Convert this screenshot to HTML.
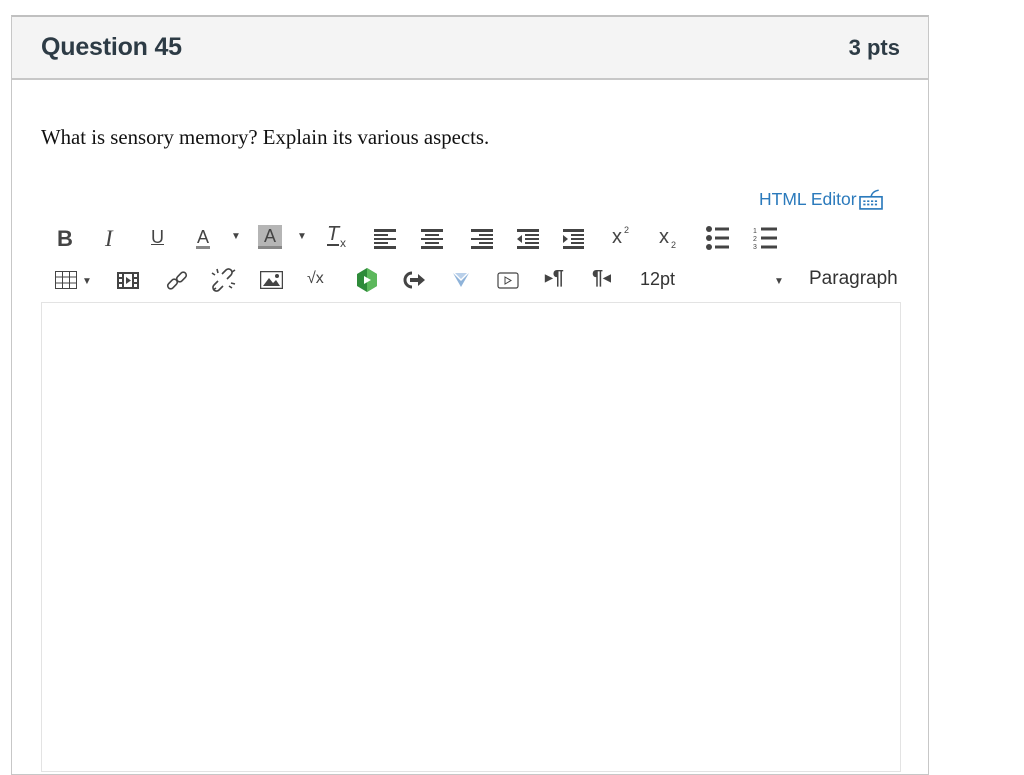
<!DOCTYPE html>
<html><head><meta charset="utf-8">
<style>
*{margin:0;padding:0;box-sizing:border-box}
body{width:1024px;height:762px;background:#fff;position:relative;overflow:hidden;font-family:"Liberation Sans",sans-serif}
.card{position:absolute;left:11px;top:15px;width:918px;height:760px;border:1px solid #c7c7c7;border-top:2px solid #c0c0c0}
.hdr{position:absolute;left:0;top:0;width:100%;height:63px;background:#f4f4f4;border-bottom:2px solid #c7c7c7}
.q{position:absolute;left:29px;top:16px;font-size:25px;font-weight:bold;color:#2d3b45;letter-spacing:-0.2px}
.pts{position:absolute;right:28px;top:18px;font-size:22px;font-weight:bold;color:#2d3b45}
.txt{position:absolute;left:41px;top:126px;font-family:"Liberation Serif",serif;font-size:20.8px;color:#111}
.html{position:absolute;left:759px;top:188px;font-size:17.5px;color:#2b7abc}
.ic{position:absolute;color:#444;font-size:18px}
.ed{position:absolute;left:41px;top:302px;width:860px;height:470px;border:1px solid #e3e3e3}
</style></head><body>
<div class="card"><div class="hdr"><div class="q">Question 45</div><div class="pts">3 pts</div></div></div>
<div class="txt">What is sensory memory? Explain its various aspects.</div>
<div class="html">HTML Editor<svg width="28" height="22" viewBox="0 0 24 20" style="vertical-align:-5px"><rect x="2" y="8" width="20" height="11" fill="none" stroke="#2b7abc" stroke-width="1.5"/><path d="M5 12h14M5 15h14" stroke="#2b7abc" stroke-width="1.5" stroke-dasharray="2 1.5"/><path d="M12 8 Q13 3 19 2" stroke="#2b7abc" fill="none" stroke-width="1.3"/></svg></div>

<!-- row 1 -->
<div class="ic" style="left:57px;top:226px;font-weight:bold;font-size:22px">B</div>
<div class="ic" style="left:105px;top:226px;font-style:italic;font-family:'Liberation Serif',serif;font-size:23px">I</div>
<div class="ic" style="left:151px;top:227px;font-size:18px;text-decoration:underline">U</div>
<div class="ic" style="left:196px;top:228px;font-size:18px;border-bottom:3px solid #888;line-height:18px;padding:0 1px">A</div>
<div class="ic" style="left:231px;top:231px;font-size:10px">▼</div>
<div class="ic" style="left:258px;top:225px;width:24px;height:24px;background:#b5b5b5;font-size:18px;text-align:center;line-height:22px;border-bottom:3px solid #888">A</div>
<div class="ic" style="left:297px;top:231px;font-size:10px">▼</div>
<div class="ic" style="left:327px;top:224px;font-style:italic;font-size:20px;line-height:20px;border-bottom:2px solid #444">T</div><div class="ic" style="left:340px;top:236px;font-size:12px">x</div>
<svg class="ic" style="left:374px;top:229px" width="210" height="20" fill="#444">
<g><rect x="0" y="0" width="22" height="3"/><rect x="0" y="5" width="14" height="2"/><rect x="0" y="9" width="22" height="2"/><rect x="0" y="13" width="14" height="2"/><rect x="0" y="17" width="22" height="3"/></g>
<g transform="translate(47,0)"><rect x="0" y="0" width="22" height="3"/><rect x="4" y="5" width="14" height="2"/><rect x="0" y="9" width="22" height="2"/><rect x="4" y="13" width="14" height="2"/><rect x="0" y="17" width="22" height="3"/></g>
<g transform="translate(97,0)"><rect x="0" y="0" width="22" height="3"/><rect x="8" y="5" width="14" height="2"/><rect x="0" y="9" width="22" height="2"/><rect x="8" y="13" width="14" height="2"/><rect x="0" y="17" width="22" height="3"/></g>
<g transform="translate(143,0)"><rect x="0" y="0" width="22" height="3"/><path d="M0 10l5-4v8z"/><rect x="8" y="5" width="14" height="2"/><rect x="8" y="9" width="14" height="2"/><rect x="8" y="13" width="14" height="2"/><rect x="0" y="17" width="22" height="3"/></g>
<g transform="translate(189,0)"><rect x="0" y="0" width="22" height="3"/><path d="M0 6l5 4-5 4z"/><rect x="8" y="5" width="14" height="2"/><rect x="8" y="9" width="14" height="2"/><rect x="8" y="13" width="14" height="2"/><rect x="0" y="17" width="22" height="3"/></g>
</svg>
<div class="ic" style="left:612px;top:226px;font-size:20px">x</div><div class="ic" style="left:624px;top:225px;font-size:9px">2</div>
<div class="ic" style="left:659px;top:226px;font-size:20px">x</div><div class="ic" style="left:671px;top:240px;font-size:9px">2</div>
<svg class="ic" style="left:706px;top:226px" width="80" height="24" fill="#444">
<circle cx="3" cy="3" r="3"/><circle cx="3" cy="12" r="3"/><circle cx="3" cy="21" r="3"/><rect x="9" y="1.5" width="14" height="3"/><rect x="9" y="10.5" width="14" height="3"/><rect x="9" y="19.5" width="14" height="3"/>
<text x="47" y="7" font-size="7" font-family="Liberation Sans">1</text><text x="47" y="15" font-size="7" font-family="Liberation Sans">2</text><text x="47" y="23" font-size="7" font-family="Liberation Sans">3</text>
<rect x="55" y="1.5" width="16" height="3"/><rect x="55" y="10.5" width="16" height="3"/><rect x="55" y="19.5" width="16" height="3"/>
</svg>

<!-- row 2 -->
<svg class="ic" style="left:55px;top:271px" width="22" height="18"><rect x="0.5" y="0.5" width="21" height="17" fill="none" stroke="#444"/><path d="M0 6h22M0 12h22M7.5 0v18M14.5 0v18" stroke="#444"/></svg>
<div class="ic" style="left:82px;top:276px;font-size:10px">▼</div>
<svg class="ic" style="left:117px;top:272px" width="22" height="17" fill="#444"><rect x="0" y="0" width="22" height="17"/><rect x="2" y="2" width="3" height="3" fill="#fff"/><rect x="2" y="7" width="3" height="3" fill="#fff"/><rect x="2" y="12" width="3" height="3" fill="#fff"/><rect x="17" y="2" width="3" height="3" fill="#fff"/><rect x="17" y="7" width="3" height="3" fill="#fff"/><rect x="17" y="12" width="3" height="3" fill="#fff"/><rect x="7" y="2" width="8" height="13" fill="#fff"/><path d="M9 5l5 3.5-5 3.5z"/></svg>
<svg class="ic" style="left:165px;top:269px" width="24" height="24" fill="none" stroke="#444" stroke-width="1.6"><rect x="2" y="12" width="11" height="6" rx="3" transform="rotate(-45 7.5 15)"/><rect x="11" y="5" width="11" height="6" rx="3" transform="rotate(-45 16.5 8)"/></svg>
<svg class="ic" style="left:210px;top:267px" width="28" height="28" fill="none" stroke="#444" stroke-width="1.6"><path d="M8 14l-4 4a3 3 0 0 0 5 5l4-4M17 12l4-4a3 3 0 0 0-5-5l-4 4"/><path d="M5 8l-3-2M8 6l-1-4M19 19l3 2M21 16l4 1M6 21l-3 2M22 5l3-2"/></svg>
<svg class="ic" style="left:260px;top:271px" width="23" height="18"><rect x="0.5" y="0.5" width="22" height="17" fill="none" stroke="#444" stroke-width="1.5"/><path d="M3 15l6-8 4 5 3-3 4 6z" fill="#444"/><circle cx="17" cy="5" r="2" fill="#444"/></svg>
<div class="ic" style="left:307px;top:270px;font-size:16px">√x</div>
<svg class="ic" style="left:354px;top:267px" width="26" height="26"><path d="M13 1l10 6v12l-10 6-10-6V7z" fill="#2e8b3a"/><path d="M13 1l10 6v12l-10 6z" fill="#5cb85c"/><path d="M10 9l7 4-7 4z" fill="#fff"/></svg>
<svg class="ic" style="left:402px;top:271px" width="24" height="18"><path d="M10 2a7 7 0 1 0 0 14" fill="none" stroke="#444" stroke-width="3"/><path d="M8 7h8V3l7 6-7 6v-4H8z" fill="#444"/></svg>
<svg class="ic" style="left:453px;top:273px" width="16" height="14"><path d="M0 0l8 8 8-8-8 14z" fill="#8fb3d9"/><path d="M2 0l6 6 6-6" fill="#b9d0ea"/></svg>
<svg class="ic" style="left:497px;top:272px" width="22" height="17"><rect x="1" y="1" width="20" height="15" rx="2" fill="none" stroke="#444" stroke-width="1.2"/><path d="M8 5l6 3.5-6 3.5z" fill="none" stroke="#444"/></svg>
<div class="ic" style="left:545px;top:267px;font-size:20px;font-weight:bold"><span style="font-size:10px;vertical-align:3px">▶</span>¶</div>
<div class="ic" style="left:592px;top:267px;font-size:20px;font-weight:bold">¶<span style="font-size:10px;vertical-align:3px">◀</span></div>
<div class="ic" style="left:640px;top:269px;font-size:18px;color:#333">12pt</div>
<div class="ic" style="left:774px;top:276px;font-size:10px">▼</div>
<div class="ic" style="left:809px;top:268px;font-size:19px;color:#333">Paragraph</div>

<div class="ed"></div>
</body></html>
